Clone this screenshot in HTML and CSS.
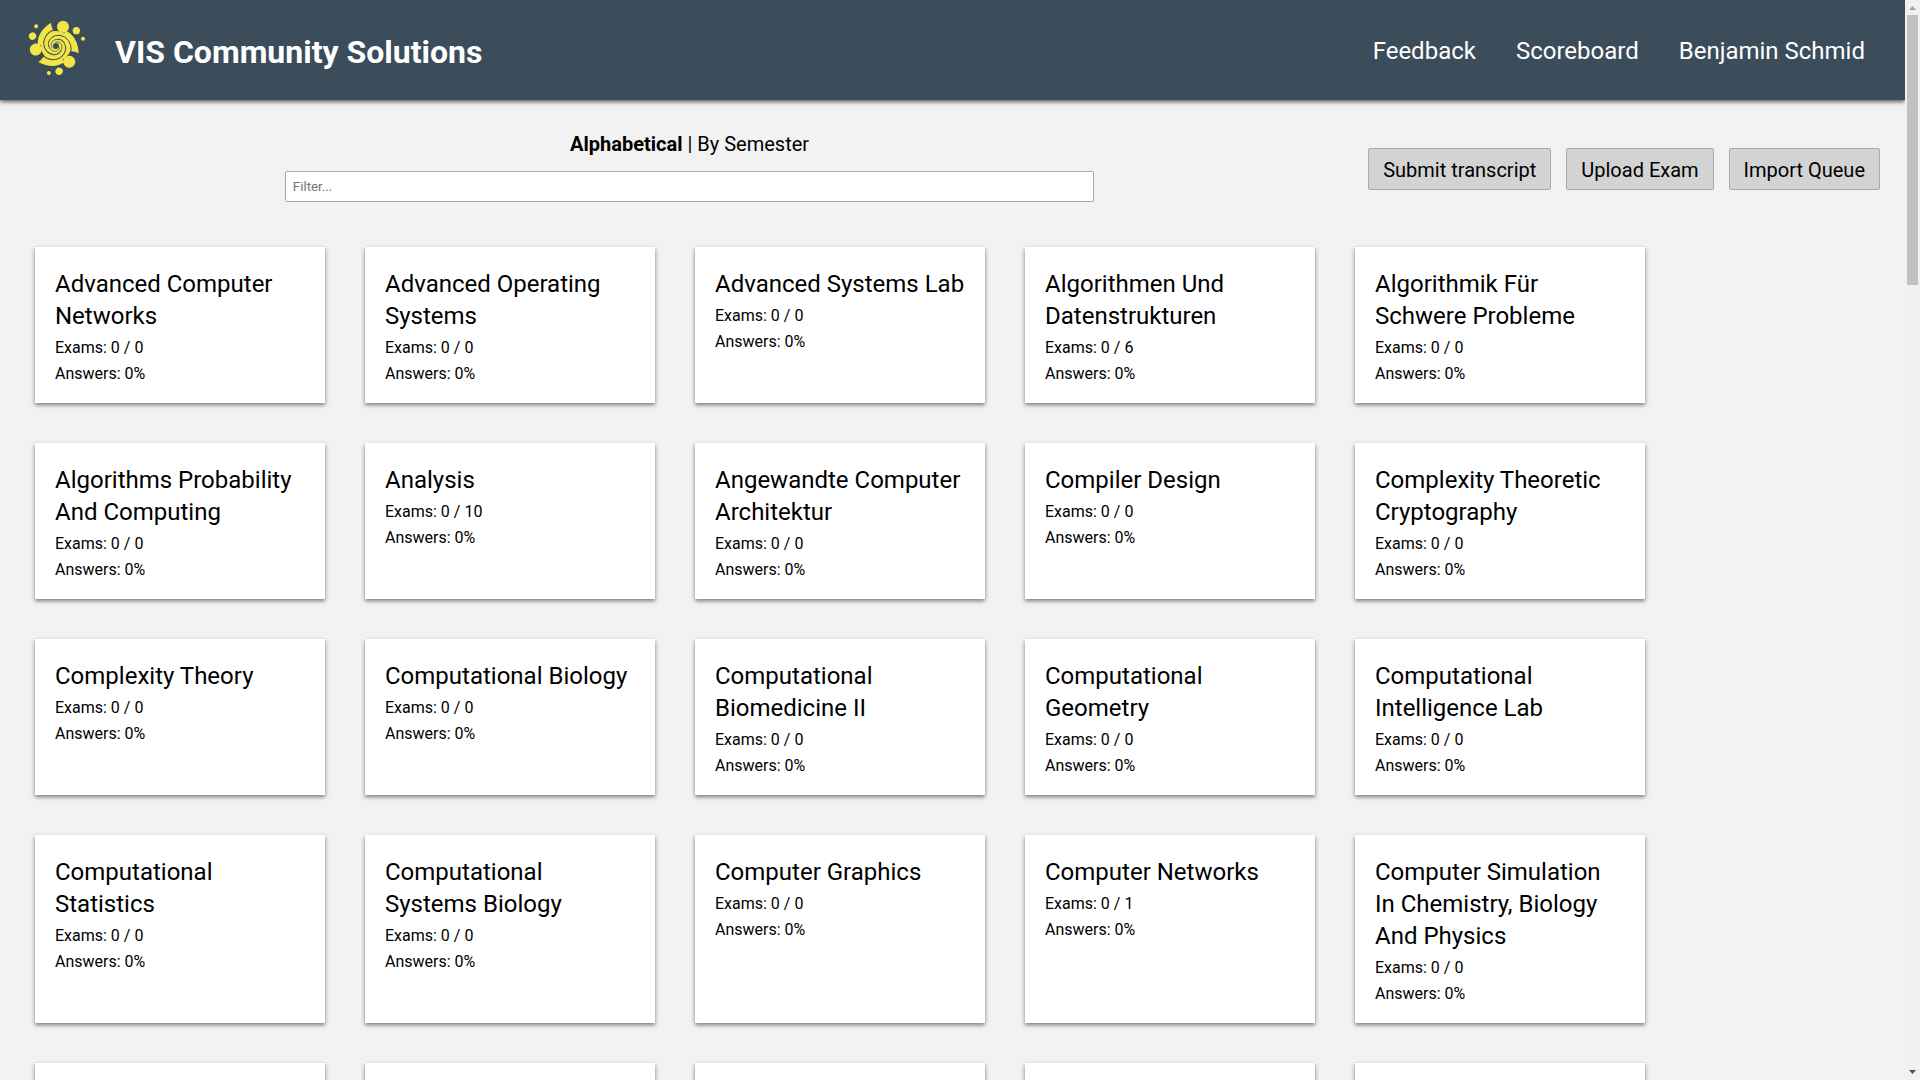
FILE: index.html
```html
<!DOCTYPE html>
<html lang="en">
<head>
<meta charset="utf-8">
<meta name="viewport" content="width=device-width, initial-scale=1">
<title>VIS Community Solutions</title>
<link rel="stylesheet" href="styles.css">
</head>
<body>
<div class="app">
  <header class="header">
    <a class="brand" href="#">
      <svg class="logo" viewBox="0 0 168 168" aria-hidden="true">
        <defs>
          <g id="arm">
            <circle cx="21" cy="-58" r="18"/>
            <circle cx="61" cy="-46" r="11"/>
            <circle cx="81" cy="-22" r="6"/>
            <path d="M30 -46Q66 -28 68 22Q58 16 48 17L0 0Z"/>
          </g>
          <g id="gap">
            <path stroke-width="3" d="M52 20L45 16A43 43 0 0 0 37 -17A37 37 0 0 0 12 -32"/>
            <path stroke-width="3" d="M12 -32A31 31 0 0 0 -12 -26A26 26 0 0 0 -23 -8A22 22 0 0 0 -18 8"/>
            <path stroke-width="2" d="M-18 8A18 18 0 0 0 -6 16A15 15 0 0 0 6 13A13 13 0 0 0 11 4"/>
          </g>
        </defs>
        <g transform="translate(78 72)">
          <g class="logo-fill">
            <circle r="45"/>
            <use href="#arm"/>
            <use href="#arm" transform="rotate(120)"/>
            <use href="#arm" transform="rotate(240)"/>
          </g>
          <g class="logo-gap">
            <use href="#gap"/>
            <use href="#gap" transform="rotate(120)"/>
            <use href="#gap" transform="rotate(240)"/>
          </g>
          <circle class="logo-core" r="9"/>
        </g>
      </svg>
      <h1 class="title">VIS Community Solutions</h1>
    </a>
    <nav class="nav">
      <a href="#">Feedback</a>
      <a href="#">Scoreboard</a>
      <a href="#">Benjamin Schmid</a>
    </nav>
  </header>
  <main>
    <div class="toolbar">
      <div class="search">
        <div class="sorting"><a class="active" href="#">Alphabetical</a> | <a href="#">By Semester</a></div>
        <input class="filter" type="text" placeholder="Filter..." aria-label="Filter">
      </div>
      <div class="actions">
        <button type="button">Submit transcript</button>
        <button type="button">Upload Exam</button>
        <button type="button">Import Queue</button>
      </div>
    </div>
    <div class="cards">
      <a class="card" href="#"><h2>Advanced Computer Networks</h2><p>Exams: 0 / 0</p><p>Answers: 0%</p></a>
      <a class="card" href="#"><h2>Advanced Operating Systems</h2><p>Exams: 0 / 0</p><p>Answers: 0%</p></a>
      <a class="card" href="#"><h2>Advanced Systems Lab</h2><p>Exams: 0 / 0</p><p>Answers: 0%</p></a>
      <a class="card" href="#"><h2>Algorithmen Und Datenstrukturen</h2><p>Exams: 0 / 6</p><p>Answers: 0%</p></a>
      <a class="card" href="#"><h2>Algorithmik Für Schwere Probleme</h2><p>Exams: 0 / 0</p><p>Answers: 0%</p></a>
      <a class="card" href="#"><h2>Algorithms Probability And Computing</h2><p>Exams: 0 / 0</p><p>Answers: 0%</p></a>
      <a class="card" href="#"><h2>Analysis</h2><p>Exams: 0 / 10</p><p>Answers: 0%</p></a>
      <a class="card" href="#"><h2>Angewandte Computer Architektur</h2><p>Exams: 0 / 0</p><p>Answers: 0%</p></a>
      <a class="card" href="#"><h2>Compiler Design</h2><p>Exams: 0 / 0</p><p>Answers: 0%</p></a>
      <a class="card" href="#"><h2>Complexity Theoretic Cryptography</h2><p>Exams: 0 / 0</p><p>Answers: 0%</p></a>
      <a class="card" href="#"><h2>Complexity Theory</h2><p>Exams: 0 / 0</p><p>Answers: 0%</p></a>
      <a class="card" href="#"><h2>Computational Biology</h2><p>Exams: 0 / 0</p><p>Answers: 0%</p></a>
      <a class="card" href="#"><h2>Computational Biomedicine II</h2><p>Exams: 0 / 0</p><p>Answers: 0%</p></a>
      <a class="card" href="#"><h2>Computational Geometry</h2><p>Exams: 0 / 0</p><p>Answers: 0%</p></a>
      <a class="card" href="#"><h2>Computational Intelligence Lab</h2><p>Exams: 0 / 0</p><p>Answers: 0%</p></a>
      <a class="card" href="#"><h2>Computational Statistics</h2><p>Exams: 0 / 0</p><p>Answers: 0%</p></a>
      <a class="card" href="#"><h2>Computational Systems Biology</h2><p>Exams: 0 / 0</p><p>Answers: 0%</p></a>
      <a class="card" href="#"><h2>Computer Graphics</h2><p>Exams: 0 / 0</p><p>Answers: 0%</p></a>
      <a class="card" href="#"><h2>Computer Networks</h2><p>Exams: 0 / 1</p><p>Answers: 0%</p></a>
      <a class="card" href="#"><h2>Computer Simulation In Chemistry, Biology And Physics</h2><p>Exams: 0 / 0</p><p>Answers: 0%</p></a>
      <a class="card" href="#"></a>
      <a class="card" href="#"></a>
      <a class="card" href="#"></a>
      <a class="card" href="#"></a>
      <a class="card" href="#"></a>
    </div>
  </main>
</div>
<div class="scrollbar" aria-hidden="true">
  <svg class="arrow arrow-up" viewBox="0 0 15 15"><path d="M4 10h7L7.500 6z"/></svg>
  <div class="thumb"></div>
  <svg class="arrow arrow-down" viewBox="0 0 15 15"><path d="M4 5h7L7.500 9z"/></svg>
</div>
</body>
</html>
```
FILE: styles.css
```css
* { box-sizing: border-box; }

body {
  margin: 0;
  height: 100vh;
  display: grid;
  grid-template-columns: 1fr 15px;
  overflow: hidden;
  background: #f2f2f2;
  color: #000;
  font-family: Roboto, "Liberation Sans", sans-serif;
}

a { color: inherit; text-decoration: none; }

.app { min-width: 0; height: 100vh; overflow: hidden; }

.header {
  display: flex;
  align-items: center;
  justify-content: space-between;
  height: 100px;
  padding: 0 40px 0 30px;
  background: #3b4c5a;
  color: #fff;
  box-shadow: 0 2px 4px rgba(0, 0, 0, 0.6);
}

.brand { display: flex; align-items: center; gap: 29px; }
.logo { width: 56px; height: 56px; overflow: visible; }
.logo-fill { fill: #f2e647; }
.logo-gap { fill: none; stroke: #3b4c5a; }
.logo-core { fill: #3b4c5a; }
.title { margin: 0; padding-top: 4px; font-size: 32px; line-height: 40px; font-weight: 700; }

.nav { display: flex; gap: 40px; padding-top: 2px; font-size: 24px; line-height: 32px; }

.toolbar {
  display: flex;
  align-items: flex-start;
  gap: 4px;
  padding: 30px 25px 0 15px;
}

.search { flex: 1; display: flex; flex-direction: column; align-items: center; gap: 13px; }
.sorting { font-size: 20px; line-height: 28px; }
.active { font-weight: 700; }

.filter {
  width: 60%;
  height: 31px;
  padding: 0 7px;
  border: 1px solid #a9a9a9;
  border-radius: 2px;
  background: #fff;
  font-family: inherit;
}
.filter::placeholder { color: #757575; }

.actions { display: flex; gap: 15px; padding-top: 18px; }
.actions button {
  height: 42px;
  padding: 2px 14px 0;
  border: 1px solid #a9a9a9;
  border-radius: 2px;
  background: #d3d3d3;
  color: #000;
  font-family: inherit;
  font-size: 20px;
}

.cards {
  display: grid;
  grid-template-columns: repeat(auto-fill, 290px);
  gap: 40px;
  padding: 45px 35px;
}

.card {
  min-height: 156px;
  padding: 21px 20px 16px;
  background: #fff;
  box-shadow: 0 2px 4px rgba(0, 0, 0, 0.5);
}
.card h2 { margin: 0 0 3px; font-size: 24px; line-height: 32px; font-weight: 400; }
.card p { margin: 0; font-size: 16px; line-height: 26px; }

.scrollbar { display: flex; flex-direction: column; height: 100vh; background: #f1f1f1; }
.arrow { width: 15px; height: 15px; }
.arrow-up { fill: #a3a3a3; }
.arrow-down { fill: #505050; margin-top: auto; }
.thumb { height: 25vh; margin: 0 2px; background: #c1c1c1; }
```
